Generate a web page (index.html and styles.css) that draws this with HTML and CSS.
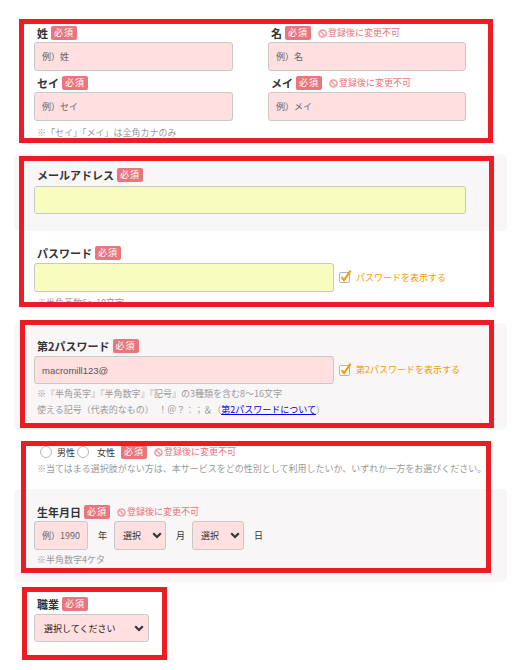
FILE: index.html
```html
<!DOCTYPE html>
<html lang="ja">
<head>
<meta charset="utf-8">
<title>会員登録</title>
<link rel="stylesheet" href="styles.css">
</head>
<body>
<div class="page">
  <section class="sec sec-name">
    <div class="name-grid">
      <div class="field">
        <div class="label-row"><span class="label">姓</span><span class="req">必須</span></div>
        <input class="input pink" placeholder="例）姓">
      </div>
      <div class="field">
        <div class="label-row"><span class="label">名</span><span class="req">必須</span><span class="lock"><svg class="ban" width="9" height="9" viewBox="0 0 10 10"><circle cx="5" cy="5" r="4" fill="none" stroke="#f29aa2" stroke-width="1.7"/><path d="M2.3 2.3L7.7 7.7" stroke="#f29aa2" stroke-width="1.7"/></svg>登録後に変更不可</span></div>
        <input class="input pink" placeholder="例）名">
      </div>
      <div class="field">
        <div class="label-row"><span class="label">セイ</span><span class="req">必須</span></div>
        <input class="input pink" placeholder="例）セイ">
      </div>
      <div class="field">
        <div class="label-row"><span class="label">メイ</span><span class="req">必須</span><span class="lock"><svg class="ban" width="9" height="9" viewBox="0 0 10 10"><circle cx="5" cy="5" r="4" fill="none" stroke="#f29aa2" stroke-width="1.7"/><path d="M2.3 2.3L7.7 7.7" stroke="#f29aa2" stroke-width="1.7"/></svg>登録後に変更不可</span></div>
        <input class="input pink" placeholder="例）メイ">
      </div>
    </div>
    <p class="note note-name">※「セイ」「メイ」は全角カナのみ</p>
  </section>

  <section class="sec gray sec-mail">
    <div class="label-row"><span class="label">メールアドレス</span><span class="req">必須</span></div>
    <input class="input yellow w-mail" type="text">
  </section>

  <section class="sec sec-pass">
    <div class="label-row"><span class="label">パスワード</span><span class="req">必須</span></div>
    <div class="pass-row">
      <input class="input yellow w-pass" type="text">
      <label class="show">
        <svg class="chk" width="13" height="14" viewBox="0 0 13 14"><rect x="0.5" y="3.5" width="10" height="10" rx="1.5" fill="#fff" stroke="#b4b4b4"/><path d="M2.6 8.2L5 11.2L11.6 1.6" fill="none" stroke="#f29b00" stroke-width="2"/></svg>
        <span>パスワードを表示する</span>
      </label>
    </div>
    <p class="note note-pass">※半角英数6～10文字</p>
  </section>

  <section class="sec gray sec-pass2">
    <div class="label-row"><span class="label">第2パスワード</span><span class="req">必須</span></div>
    <div class="pass-row">
      <input class="input pink w-pass value" type="text" value="macromill123@">
      <label class="show">
        <svg class="chk" width="13" height="14" viewBox="0 0 13 14"><rect x="0.5" y="3.5" width="10" height="10" rx="1.5" fill="#fff" stroke="#b4b4b4"/><path d="M2.6 8.2L5 11.2L11.6 1.6" fill="none" stroke="#f29b00" stroke-width="2"/></svg>
        <span>第2パスワードを表示する</span>
      </label>
    </div>
    <div class="note note-pass2">
      <p>※『半角英字』『半角数字』『記号』の3種類を含む8～16文字</p>
      <p>使える記号（代表的なもの）　！＠？：；＆（<a href="#" class="link">第2パスワードについて</a>）</p>
    </div>
  </section>

  <section class="sec sec-gender">
    <div class="label-row gender-row">
      <span class="radio first"></span><span class="radio-text">男性</span>
      <span class="radio second"></span><span class="radio-text wide">女性</span>
      <span class="req">必須</span>
      <span class="lock"><svg class="ban" width="9" height="9" viewBox="0 0 10 10"><circle cx="5" cy="5" r="4" fill="none" stroke="#f29aa2" stroke-width="1.7"/><path d="M2.3 2.3L7.7 7.7" stroke="#f29aa2" stroke-width="1.7"/></svg>登録後に変更不可</span>
    </div>
    <p class="note note-gender">※当てはまる選択肢がない方は、本サービスをどの性別として利用したいか、いずれか一方をお選びください。</p>
  </section>

  <section class="sec gray sec-birth">
    <div class="label-row"><span class="label">生年月日</span><span class="req">必須</span><span class="lock"><svg class="ban" width="9" height="9" viewBox="0 0 10 10"><circle cx="5" cy="5" r="4" fill="none" stroke="#f29aa2" stroke-width="1.7"/><path d="M2.3 2.3L7.7 7.7" stroke="#f29aa2" stroke-width="1.7"/></svg>登録後に変更不可</span></div>
    <div class="birth-row">
      <input class="input pink w-year" placeholder="例）1990">
      <span class="unit">年</span>
      <div class="select pink w-date"><span>選択</span><svg width="10" height="7" viewBox="0 0 10 7"><path d="M1.2 1.2L5 5L8.8 1.2" fill="none" stroke="#333" stroke-width="2.2"/></svg></div>
      <span class="unit">月</span>
      <div class="select pink w-date"><span>選択</span><svg width="10" height="7" viewBox="0 0 10 7"><path d="M1.2 1.2L5 5L8.8 1.2" fill="none" stroke="#333" stroke-width="2.2"/></svg></div>
      <span class="unit">日</span>
    </div>
    <p class="note note-birth">※半角数字4ケタ</p>
  </section>

  <section class="sec sec-job">
    <div class="label-row"><span class="label">職業</span><span class="req">必須</span></div>
    <div class="select pink w-job"><span>選択してください</span><svg width="10" height="7" viewBox="0 0 10 7"><path d="M1.2 1.2L5 5L8.8 1.2" fill="none" stroke="#333" stroke-width="2.2"/></svg></div>
  </section>
</div>

<div class="mark m1"></div>
<div class="mark m2"></div>
<div class="mark m3"></div>
<div class="mark m4"></div>
<div class="mark m5"></div>
</body>
</html>
```

FILE: styles.css
```css
* { box-sizing: border-box; }

html, body {
  margin: 0;
  padding: 0;
  background: #fff;
}

body {
  position: relative;
  width: 524px;
  height: 670px;
  overflow: hidden;
  font-family: "Noto Sans CJK JP", "Noto Sans", sans-serif;
  color: #333;
}

p { margin: 0; }

.page {
  margin-left: 14px;
  width: 493px;
}

.sec {
  padding: 0 20px;
}

.gray {
  background: #f8f6f7;
  border-radius: 5px;
}

/* label rows */
.label-row {
  display: flex;
  align-items: center;
  height: 14px;
  white-space: nowrap;
}

.label {
  padding-left: 3px;
  margin-right: 3px;
  font-size: 11px;
  font-weight: 700;
  line-height: 14px;
  color: #333;
}

.req {
  display: inline-flex;
  align-items: center;
  justify-content: center;
  width: 26px;
  height: 14px;
  border-radius: 2px;
  background: #e9757e;
  color: #fff;
  font-size: 9px;
  letter-spacing: 1px;
  line-height: 14px;
}

.lock {
  display: inline-flex;
  align-items: center;
  margin-left: 7px;
  font-size: 9px;
  line-height: 14px;
  color: #e8737b;
}

.ban {
  margin-right: 1px;
}

/* inputs */
.input {
  display: block;
  height: 29px;
  margin: 0;
  padding: 0 7px;
  border: 1px solid #c8c8c8;
  border-radius: 3px;
  font-family: "Noto Sans CJK JP", sans-serif;
  font-size: 9px;
  color: #555;
  outline: none;
}

.input::placeholder {
  color: #666;
  opacity: 1;
}

.pink { background: #ffdfe0; }
.yellow { background: #f9fcbf; }

.value {
  font-family: "Liberation Sans", "Noto Sans", sans-serif;
  font-size: 9.5px;
  color: #555;
}

.note {
  padding-left: 3px;
  font-size: 9px;
  line-height: 12px;
  color: #9a9a9a;
  white-space: nowrap;
}

/* name */
.sec-name {
  padding-top: 26px;
  padding-bottom: 15px;
}

.name-grid {
  display: grid;
  grid-template-columns: 199px 198px;
  column-gap: 35px;
  row-gap: 5px;
}

.field .input {
  width: 100%;
  margin-top: 2px;
}

.note-name { margin-top: 6px; }

/* mail */
.sec-mail {
  padding-top: 14px;
  padding-bottom: 17px;
}

.sec-mail .input {
  margin-top: 4px;
  height: 28px;
}

.w-mail { width: 432px; }

/* password */
.sec-pass {
  padding-top: 15px;
  padding-bottom: 14px;
}

.pass-row {
  display: flex;
  align-items: center;
  margin-top: 3px;
}

.w-pass { width: 300px; }

.show {
  display: flex;
  align-items: center;
  margin-left: 5px;
  margin-top: -3px;
  font-size: 9px;
  line-height: 12px;
  color: #f29b00;
}

.chk { margin-right: 4px; }

.show span { margin-top: 3px; }

.note-pass { margin-top: 5px; }

/* password 2 */
.sec-pass2 {
  padding-top: 16px;
  padding-bottom: 12px;
}

.sec-pass2 .input { height: 28px; }

.note-pass2 {
  margin-top: 2px;
  line-height: 16px;
}

.link {
  color: #0000ee;
  text-decoration: underline;
}

/* gender */
.sec-gender {
  padding-top: 15px;
  padding-bottom: 14px;
}

.radio {
  display: inline-block;
  width: 12px;
  height: 12px;
  border: 1px solid #b8b8b8;
  border-radius: 50%;
  background: #fff;
}

.radio.first { margin-left: 6px; }
.radio.second { margin-left: 2px; }

.radio-text {
  margin-left: 5px;
  font-size: 9px;
  color: #333;
}

.radio-text.wide {
  margin-left: 8px;
  margin-right: 6px;
}

.note-gender { margin-top: 4px; }

/* birth */
.sec-birth {
  padding-top: 16px;
  padding-bottom: 16px;
}

.birth-row {
  display: flex;
  align-items: center;
  margin-top: 2px;
}

.w-year { width: 54px; }

.unit {
  margin: 0 7px 0 10px;
  font-size: 9px;
  color: #333;
}

.select {
  display: flex;
  align-items: center;
  justify-content: space-between;
  height: 29px;
  border: 1px solid #c8c8c8;
  border-radius: 3px;
  font-size: 9px;
  color: #333;
}

.w-date {
  width: 52px;
  padding: 0 3px 0 8px;
}

.note-birth { margin-top: 4px; }

/* job */
.sec-job {
  padding-top: 15px;
  padding-bottom: 30px;
}

.w-job {
  width: 115px;
  height: 28px;
  margin-top: 3px;
  padding: 0 4px 0 9px;
  color: #222;
}

/* annotation boxes */
.mark {
  position: absolute;
  border: 5px solid #ed1c24;
  pointer-events: none;
}

.m1 { left: 19px; top: 19px; width: 474px; height: 124px; }
.m2 { left: 19px; top: 156px; width: 475px; height: 151px; }
.m3 { left: 20px; top: 320px; width: 474px; height: 108px; }
.m4 { left: 21px; top: 441px; width: 470px; height: 132px; }
.m5 { left: 22px; top: 587px; width: 145px; height: 73px; }
```
